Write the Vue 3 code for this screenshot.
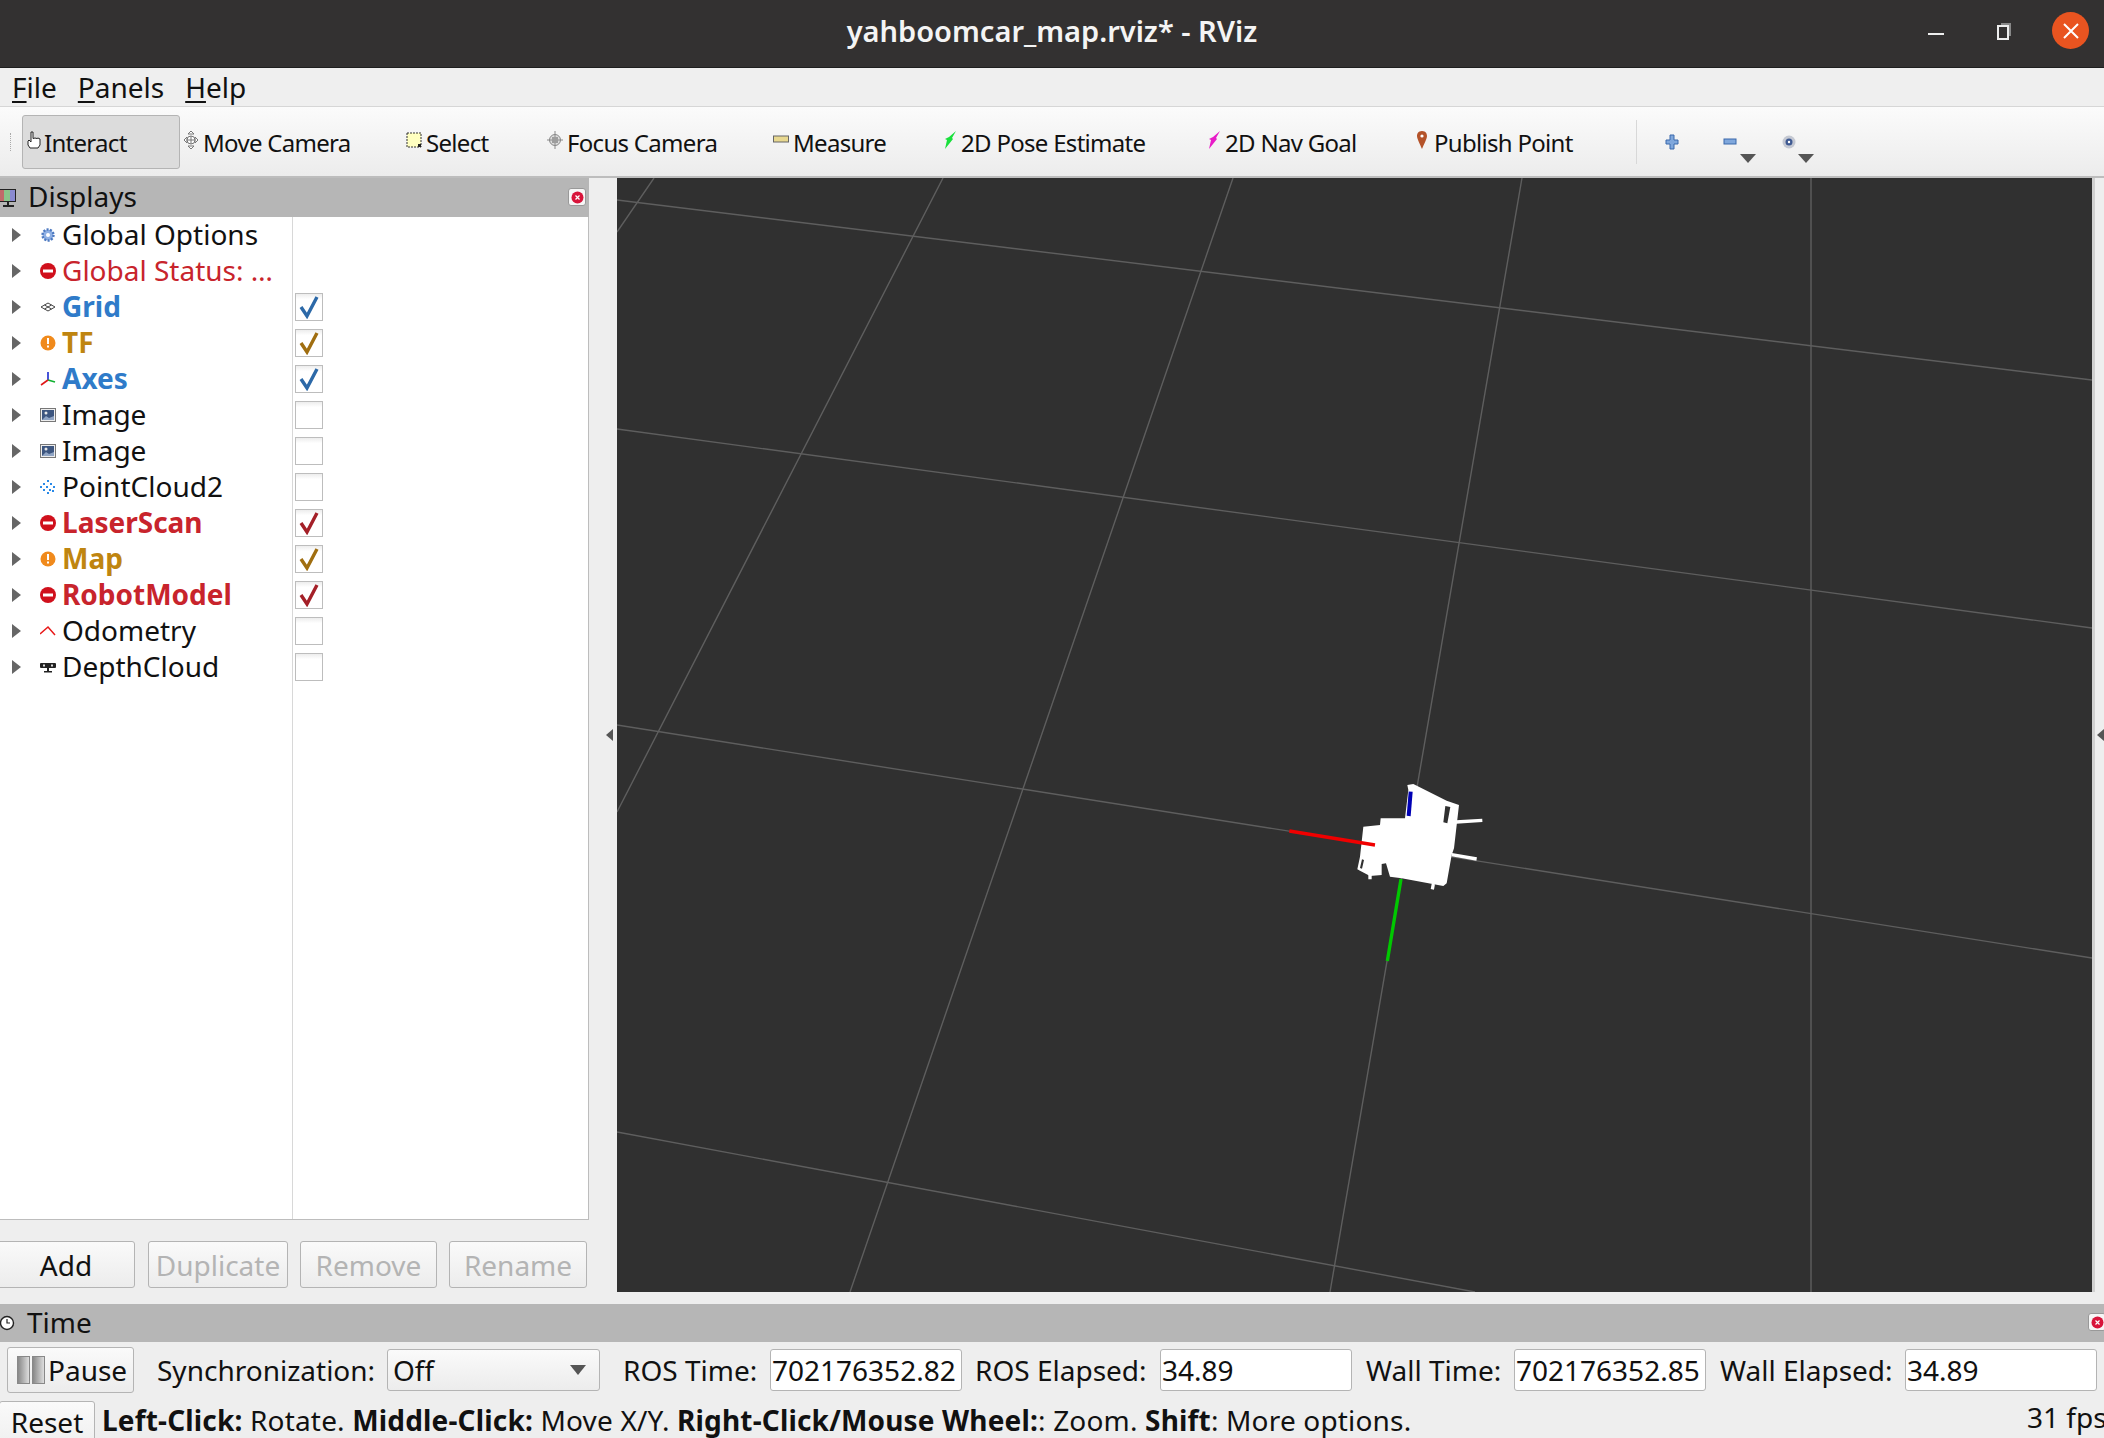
<template>
  <div class="rviz">
    <!-- window title -->
    <header class="titlebar">
      <span class="title">yahboomcar_map.rviz* - RViz</span>
      <div class="win-btns">
        <span class="win-min"></span>
        <span class="win-max"></span>
        <span class="win-close">
          <svg width="20" height="20" viewBox="0 0 20 20"><path d="M3 3L17 17M17 3L3 17" stroke="#fff" stroke-width="2" /></svg>
        </span>
      </div>
    </header>

    <nav class="menubar">
      <span><u>F</u>ile</span>
      <span><u>P</u>anels</span>
      <span><u>H</u>elp</span>
    </nav>

    <!-- tools -->
    <div class="toolbar">
      <span class="handle"></span>
      <div
        v-for="t in tools"
        :key="t.name"
        class="tool"
        :class="{ active: t.active }"
        :style="{ width: t.width + 'px' }"
      >
        <svg class="tool-icon" viewBox="0 0 16 20">
          <path v-if="t.icon === 'hand'" d="M5 2v10L3 10 2 11v4l2 3h8l2-3V9l-2-1-1 .5L9 8l-2 .5V2z" fill="#fff" stroke="#222" stroke-width="1" />
          <g v-else-if="t.icon === 'move'" fill="#fff" stroke="#777" stroke-width="1">
            <path d="M8 1l3 3H5zM8 19l3-3H5zM1 10l3-3v6zM15 10l-3-3v6z" />
            <circle cx="8" cy="10" r="4" />
            <path d="M8 6v8M4 10h8" />
          </g>
          <g v-else-if="t.icon === 'select'">
            <rect x="1" y="3" width="14" height="14" fill="#ffffc0" stroke="#333" stroke-dasharray="2 1" />
            <rect x="12" y="14" width="3" height="3" fill="#222" />
          </g>
          <g v-else-if="t.icon === 'focus'" fill="none" stroke="#888">
            <circle cx="8" cy="10" r="5.5" fill="#ddd" />
            <path d="M8 1v18M0 10h16M5 8h6M5 12h6M6 7v6M10 7v6" />
          </g>
          <g v-else-if="t.icon === 'ruler'">
            <rect x="0.5" y="6" width="15" height="6" fill="#e8d890" stroke="#666" />
          </g>
          <path v-else-if="t.icon === 'pose'" d="M15 1L11 8l1 1-8 10 2-9-2-1 4-2z" fill="#19e03c" />
          <path v-else-if="t.icon === 'nav'" d="M15 1L11 8l1 1-8 10 2-9-2-1 4-2z" fill="#e81cc8" />
          <g v-else-if="t.icon === 'pin'">
            <path d="M8 1c4 0 5 3 5 5 0 3-3 8-5 13-2-5-5-10-5-13 0-2 1-5 5-5z" fill="#b4532a" />
            <circle cx="8" cy="6" r="1.6" fill="#fff" />
          </g>
        </svg>
        <span>{{ t.name }}</span>
      </div>
      <span class="tool-sep"></span>
      <div class="view-tools">
        <div class="view-tool">
          <svg width="14" height="16" viewBox="0 0 14 16"><path d="M5 1h4v5h4v4H9v5H5v-5H1V6h4z" fill="#7fa7dc" stroke="#3a68ab" /></svg>
        </div>
        <div class="view-tool">
          <svg width="14" height="16" viewBox="0 0 14 16"><rect x="1" y="5" width="12" height="5" fill="#7fa7dc" stroke="#3a68ab" /></svg>
          <i class="drop"></i>
        </div>
        <div class="view-tool">
          <svg width="16" height="16" viewBox="0 0 16 16"><circle cx="8" cy="8" r="6.5" fill="#c4c8d2" /><circle cx="8" cy="8" r="3.5" fill="#3f5a92" /><circle cx="8" cy="8" r="1.2" fill="#fff" /></svg>
          <i class="drop"></i>
        </div>
      </div>
    </div>

    <main class="workspace">
      <!-- displays panel -->
      <section class="displays">
        <div class="panel-head">
          <svg class="monitor" width="17" height="20" viewBox="0 0 17 20">
            <rect x="-3" y="1" width="19" height="13" fill="#222" />
            <rect x="-2" y="2" width="6" height="11" fill="#c26a6a" />
            <rect x="4" y="2" width="6" height="11" fill="#8ac48a" />
            <rect x="10" y="2" width="5" height="11" fill="#8a8ad0" />
            <path d="M8 14v3M3 18h11" stroke="#222" stroke-width="2" />
          </svg>
          <span class="head-label">Displays</span>
          <span class="close-box">
            <svg width="13" height="13" viewBox="0 0 13 13"><circle cx="6.5" cy="6.5" r="6" fill="#d8143a" /><path d="M4.5 4.5l4 4M8.5 4.5l-4 4" stroke="#fff" stroke-width="1.2" /></svg>
          </span>
        </div>
        <div class="tree">
          <div v-for="(r, i) in rows" :key="i" class="tree-row">
            <div class="tree-name" :class="[r.tone, { bold: r.bold }]">
              <i class="arrow"></i>
              <svg class="row-icon" width="16" height="16" viewBox="0 0 16 16">
                <g v-if="r.icon === 'gear'">
                  <circle cx="8" cy="8" r="5.5" fill="#8fb0e4" stroke="#4d79c0" stroke-width="2.4" stroke-dasharray="2 1.4" />
                  <circle cx="8" cy="8" r="2" fill="#fff" />
                </g>
                <g v-else-if="r.icon === 'err'">
                  <circle cx="8" cy="8" r="8" fill="#d0101c" />
                  <rect x="3" y="6.5" width="10" height="3" fill="#fff" />
                </g>
                <g v-else-if="r.icon === 'warn'">
                  <circle cx="8" cy="8" r="7.5" fill="#f08a1c" />
                  <rect x="7" y="3" width="2" height="6" fill="#fff" />
                  <rect x="7" y="10.5" width="2" height="2" fill="#fff" />
                </g>
                <path v-else-if="r.icon === 'grid'" d="M1 8l7-4 7 4-7 4zM4.5 6l7 4M11.5 6l-7 4" fill="none" stroke="#444" />
                <g v-else-if="r.icon === 'axes'" fill="none" stroke-width="1.6">
                  <path d="M8 9V1" stroke="#1a2ad0" />
                  <path d="M8 9l7 2" stroke="#10b030" />
                  <path d="M8 9l-7 5" stroke="#e01818" />
                </g>
                <g v-else-if="r.icon === 'image'">
                  <rect x="0.5" y="1.5" width="15" height="13" fill="#eee" stroke="#777" />
                  <rect x="2" y="3" width="12" height="10" fill="#3d5680" />
                  <path d="M2 13l4-4 3 2 5-2v4z" fill="#8fa4c4" />
                  <circle cx="6" cy="6" r="1.5" fill="#e8e8e8" />
                </g>
                <g v-else-if="r.icon === 'cloud'" fill="#2a8ae8">
                  <rect x="7" y="1" width="2" height="2" /><rect x="3" y="4" width="2" height="2" />
                  <rect x="10" y="4" width="2" height="2" /><rect x="0" y="7" width="2" height="2" />
                  <rect x="6" y="7" width="2" height="2" /><rect x="13" y="7" width="2" height="2" />
                  <rect x="3" y="10" width="2" height="2" /><rect x="9" y="10" width="2" height="2" />
                  <rect x="7" y="13" width="2" height="2" /><rect x="12" y="11" width="2" height="2" />
                </g>
                <path v-else-if="r.icon === 'odom'" d="M0 11l8-7 7 8M8 4" fill="none" stroke="#e81818" stroke-width="1.5" />
                <g v-else-if="r.icon === 'depth'" fill="#222">
                  <rect x="0" y="4" width="16" height="5" rx="1" />
                  <rect x="3" y="5.5" width="2" height="2" fill="#ddd" /><rect x="11" y="5.5" width="2" height="2" fill="#ddd" />
                  <rect x="7" y="9" width="2" height="3" /><rect x="4" y="12" width="8" height="1.5" />
                </g>
              </svg>
              <span class="row-label">{{ r.name }}</span>
            </div>
            <div v-if="r.check !== undefined" class="checkbox">
              <svg v-if="r.check" width="24" height="24" viewBox="0 0 24 24">
                <path d="M4 12l6 9L20 2" fill="none" :stroke="checkColor(r.tone)" stroke-width="3.4" />
              </svg>
            </div>
          </div>
        </div>
        <div class="panel-btns">
          <button class="btn add">Add</button>
          <button class="btn off dup">Duplicate</button>
          <button class="btn off rem">Remove</button>
          <button class="btn off ren">Rename</button>
        </div>
      </section>

      <div class="left-split"><i class="split-tri"></i></div>

      <!-- 3D view -->
      <section class="view3d">
        <svg width="1475" height="1114" viewBox="617 178 1475 1114">
          <g stroke="#5e5e5e" stroke-width="1.4" fill="none">
            <path d="M617 200L2092 380M617 429L2092 628M617 725L2092 958M617 1132L1475 1292" />
            <path d="M654 178L617 232M943 178L617 812M1233 178L850 1292M1522 178L1330 1292M1811 178V1292" />
          </g>
          <g transform="translate(1270 760) scale(.33333)">
            <path fill="#fff" d="M412 75L430 72L530 122L567 135L552 265L545 285L530 370L520 378L395 355L360 350L348 310L335 312L335 345L300 348L270 332L262 328L270 290L280 200L330 195L332 175L405 175L415 90Z" />
            <path d="M558 186L637 181M545 284L620 297M300 345V358M490 372L487 388" stroke="#fff" stroke-width="10" />
            <path fill="#303030" d="M526 138L541 141L532 190L520 187ZM276 298L282 300L276 326L270 324Z" />
            <path d="M422 95L416 168" stroke="#0000b4" stroke-width="12" />
            <path d="M58 213L315 255" stroke="#f00000" stroke-width="10" />
            <path d="M393 357L352 603" stroke="#00c800" stroke-width="10" />
          </g>
        </svg>
      </section>

      <div class="right-split"><i class="split-tri-r"></i></div>
    </main>

    <div class="h-split"></div>

    <!-- time panel -->
    <section class="time-panel">
      <div class="panel-head time-head">
        <svg class="clock" width="16" height="20" viewBox="0 0 16 20">
          <circle cx="8" cy="10" r="6.5" fill="#fff" stroke="#222" stroke-width="1.4" />
          <path d="M8 6v4h3" fill="none" stroke="#222" stroke-width="1.2" />
        </svg>
        <span class="head-label">Time</span>
        <span class="close-box">
          <svg width="13" height="13" viewBox="0 0 13 13"><circle cx="6.5" cy="6.5" r="6" fill="#d8143a" /><path d="M4.5 4.5l4 4M8.5 4.5l-4 4" stroke="#fff" stroke-width="1.2" /></svg>
        </span>
      </div>
      <div class="time-row">
        <button class="btn pause"><i></i><i></i><span>Pause</span></button>
        <label class="lbl sync">Synchronization:</label>
        <div class="combo">Off<i></i></div>
        <label class="lbl ros-t">ROS Time:</label>
        <div class="field">702176352.82</div>
        <label class="lbl ros-e">ROS Elapsed:</label>
        <div class="field">34.89</div>
        <label class="lbl wall-t">Wall Time:</label>
        <div class="field">702176352.85</div>
        <label class="lbl wall-e">Wall Elapsed:</label>
        <div class="field">34.89</div>
      </div>
      <div class="status-row">
        <button class="btn reset">Reset</button>
        <span class="hint"><b>Left-Click:</b> Rotate. <b>Middle-Click:</b> Move X/Y. <b>Right-Click/Mouse Wheel:</b>: Zoom. <b>Shift</b>: More options.</span>
        <span class="fps">31 fps</span>
      </div>
    </section>
  </div>
</template>

<script setup>
const tools = [
  { name: 'Interact', icon: 'hand', width: 158, active: true },
  { name: 'Move Camera', icon: 'move', width: 223 },
  { name: 'Select', icon: 'select', width: 141 },
  { name: 'Focus Camera', icon: 'focus', width: 226 },
  { name: 'Measure', icon: 'ruler', width: 168 },
  { name: '2D Pose Estimate', icon: 'pose', width: 264 },
  { name: '2D Nav Goal', icon: 'nav', width: 209 },
  { name: 'Publish Point', icon: 'pin', width: 221 }
]

const rows = [
  { name: 'Global Options', icon: 'gear' },
  { name: 'Global Status: …', icon: 'err', tone: 'red' },
  { name: 'Grid', icon: 'grid', tone: 'blue', bold: true, check: true },
  { name: 'TF', icon: 'warn', tone: 'orange', bold: true, check: true },
  { name: 'Axes', icon: 'axes', tone: 'blue', bold: true, check: true },
  { name: 'Image', icon: 'image', check: false },
  { name: 'Image', icon: 'image', check: false },
  { name: 'PointCloud2', icon: 'cloud', check: false },
  { name: 'LaserScan', icon: 'err', tone: 'red', bold: true, check: true },
  { name: 'Map', icon: 'warn', tone: 'orange', bold: true, check: true },
  { name: 'RobotModel', icon: 'err', tone: 'red', bold: true, check: true },
  { name: 'Odometry', icon: 'odom', check: false },
  { name: 'DepthCloud', icon: 'depth', check: false }
]

function checkColor(tone) {
  if (tone === 'red') return '#a42028'
  if (tone === 'orange') return '#a06e10'
  return '#2c69a8'
}
</script>

<style>
html, body {
  margin: 0;
  background: #eeeeee;
  overflow: hidden;
}
</style>

<style scoped>
.rviz {
  width: 2104px;
  height: 1438px;
  overflow: hidden;
  display: flex;
  flex-direction: column;
  background: #eeeeee;
  font-family: "Noto Sans", "Open Sans", sans-serif;
  font-size: 28px;
  color: #111;
}

.titlebar {
  height: 67px;
  flex: none;
  position: relative;
  display: flex;
  align-items: center;
  justify-content: center;
  background: #333131;
  border-bottom: 1px solid #1e1e1e;
}
.title {
  color: #f4f4f4;
  font-weight: 600;
  font-size: 29px;
  margin-bottom: 6px;
}
.win-btns {
  position: absolute;
  right: 0;
  top: 0;
  width: 190px;
  height: 67px;
}
.win-min {
  position: absolute;
  left: 14px;
  top: 33px;
  width: 16px;
  height: 2px;
  background: #eee;
}
.win-max {
  position: absolute;
  left: 83px;
  top: 25px;
  width: 8px;
  height: 11px;
  border: 2px solid #eee;
  box-shadow: 3px -3px 0 -1px #888;
}
.win-close {
  position: absolute;
  left: 138px;
  top: 12px;
  width: 37px;
  height: 37px;
  border-radius: 50%;
  background: #e95420;
  display: flex;
  align-items: center;
  justify-content: center;
}

.menubar {
  height: 38px;
  flex: none;
  display: flex;
  gap: 21px;
  padding-left: 12px;
  align-items: center;
  background: #efefef;
  border-bottom: 1px solid #d6d6d6;
}
.menubar u { text-underline-offset: 3px; }

.toolbar {
  height: 71px;
  flex: none;
  display: flex;
  align-items: center;
  position: relative;
  padding-left: 22px;
  padding-top: 1px;
  background: linear-gradient(#fbfbfb, #ececec);
  border-bottom: 2px solid #bdbdbd;
  box-sizing: border-box;
  font-size: 24px;
  letter-spacing: -0.7px;
}
.handle {
  position: absolute;
  left: 10px;
  top: 26px;
  height: 18px;
  border-left: 1px dotted #aaa;
}
.tool {
  height: 54px;
  flex: none;
  display: flex;
  align-items: center;
  box-sizing: border-box;
  padding-left: 3px;
  gap: 4px;
  white-space: nowrap;
}
.tool.active {
  gap: 2px;
  background: #dcdcdc;
  border: 1px solid #b4b4b4;
  border-radius: 3px;
}
.tool-icon {
  width: 16px;
  height: 20px;
  flex: none;
  margin-bottom: 4px;
}
.tool-sep {
  width: 1px;
  height: 44px;
  background: #d8d8d8;
  margin-left: 4px;
}
.view-tools {
  display: flex;
  margin-left: 28px;
}
.view-tool {
  width: 58px;
  height: 54px;
  position: relative;
  display: flex;
  justify-content: flex-start;
  padding-top: 19px;
  box-sizing: border-box;
}
.drop {
  position: absolute;
  left: 17px;
  top: 39px;
  border-left: 8px solid transparent;
  border-right: 8px solid transparent;
  border-top: 9px solid #555;
}

.workspace {
  height: 1114px;
  flex: none;
  display: flex;
}
.displays {
  width: 589px;
  flex: none;
  display: flex;
  flex-direction: column;
}
.panel-head {
  height: 39px;
  flex: none;
  display: flex;
  align-items: center;
  position: relative;
  background: #b6b6b6;
}
.monitor { margin-right: 11px; }
.head-label { margin-bottom: 3px; }
.close-box {
  position: absolute;
  right: 3px;
  top: 10px;
  width: 18px;
  height: 18px;
  box-sizing: border-box;
  background: #f6f6f6;
  border: 1px solid #999;
  border-radius: 3px;
  display: flex;
  align-items: center;
  justify-content: center;
}

.tree {
  flex: 1;
  background: #fff;
  border-right: 1px solid #bdbdbd;
  border-bottom: 1px solid #bdbdbd;
  background-image: linear-gradient(#d8d8d8, #d8d8d8);
  background-size: 1px 100%;
  background-position: 292px 0;
  background-repeat: no-repeat;
}
.tree-row {
  height: 36px;
  display: flex;
  align-items: center;
}
.tree-name {
  width: 295px;
  flex: none;
  display: flex;
  align-items: center;
  padding-left: 12px;
  box-sizing: border-box;
  white-space: nowrap;
}
.arrow {
  width: 0;
  height: 0;
  border-left: 9px solid #666;
  border-top: 7px solid transparent;
  border-bottom: 7px solid transparent;
  margin-right: 19px;
}
.row-icon { margin-right: 6px; flex: none; }
.row-label { margin-bottom: 2px; }
.bold { font-weight: 700; }
.red { color: #c8242c; }
.blue { color: #2f7bc9; }
.orange { color: #bf8510; }
.checkbox {
  width: 28px;
  height: 28px;
  box-sizing: border-box;
  border: 1px solid #bdbdbd;
  background: linear-gradient(#ededed, #fff 20%);
  display: flex;
  align-items: center;
  justify-content: center;
}

.panel-btns {
  height: 72px;
  flex: none;
  display: flex;
  align-items: flex-start;
  padding-top: 21px;
  box-sizing: border-box;
  overflow: hidden;
}
.btn {
  font: inherit;
  height: 47px;
  padding: 0;
  color: #111;
  background: linear-gradient(#fafafa, #ececec);
  border: 1px solid #b4b4b4;
  border-radius: 3px;
  box-sizing: border-box;
}
.btn.off { color: #b4b4b4; }
.add { width: 138px; margin-left: -3px; }
.dup { width: 140px; margin-left: 13px; }
.rem { width: 137px; margin-left: 12px; }
.ren { width: 138px; margin-left: 12px; }

.left-split {
  width: 28px;
  flex: none;
  display: flex;
  align-items: center;
  padding-left: 17px;
  box-sizing: border-box;
}
.split-tri {
  border-right: 7px solid #555;
  border-top: 6px solid transparent;
  border-bottom: 6px solid transparent;
}
.view3d {
  width: 1475px;
  flex: none;
  background: #303030;
  line-height: 0;
}
.view3d svg { display: block; }
.right-split {
  flex: 1;
  display: flex;
  align-items: center;
  justify-content: flex-end;
  border-left: 3px solid #d0d0d0;
}
.split-tri-r {
  border-right: 7px solid #555;
  border-top: 6px solid transparent;
  border-bottom: 6px solid transparent;
}

.h-split {
  height: 12px;
  flex: none;
}
.time-panel {
  flex: 1;
  display: flex;
  flex-direction: column;
}
.time-head {
  height: 38px;
}
.clock { margin-right: 12px; margin-left: -1px; }
.time-head .close-box { right: -2px; top: 9px; }

.time-row {
  height: 52px;
  flex: none;
  display: flex;
  align-items: center;
  padding-left: 7px;
  padding-top: 3px;
  box-sizing: border-box;
}
.pause {
  width: 127px;
  height: 46px;
  display: flex;
  align-items: center;
  padding-left: 9px;
  flex: none;
}
.pause i {
  width: 13px;
  height: 28px;
  margin-right: 2px;
  background: linear-gradient(90deg, #888, #ddd);
  border: 1px solid #888;
  box-sizing: border-box;
}
.pause span { margin-left: 1px; }
.lbl { flex: none; white-space: nowrap; }
.sync { margin-left: 23px; width: 230px; }
.ros-t { margin-left: 23px; width: 147px; }
.ros-e { margin-left: 13px; width: 185px; }
.wall-t { margin-left: 14px; width: 148px; }
.wall-e { margin-left: 14px; width: 185px; }
.combo {
  width: 213px;
  height: 42px;
  flex: none;
  box-sizing: border-box;
  border: 1px solid #b4b4b4;
  border-radius: 3px;
  background: linear-gradient(#fafafa, #ececec);
  padding-left: 5px;
  display: flex;
  align-items: center;
  justify-content: space-between;
}
.combo i {
  margin-right: 13px;
  border-left: 8px solid transparent;
  border-right: 8px solid transparent;
  border-top: 10px solid #555;
}
.field {
  width: 192px;
  height: 42px;
  flex: none;
  box-sizing: border-box;
  border: 1px solid #b4b4b4;
  border-radius: 3px;
  background: #fff;
  padding-left: 1px;
  display: flex;
  align-items: center;
  white-space: nowrap;
}

.status-row {
  flex: 1;
  display: flex;
  align-items: flex-start;
  padding-top: 7px;
  position: relative;
  white-space: nowrap;
}
.reset {
  width: 96px;
  height: 60px;
  margin-left: -1px;
  flex: none;
  padding-bottom: 18px;
}
.hint { margin-left: 7px; letter-spacing: 0.17px; }
.fps { position: absolute; left: 2027px; top: 4px; }
</style>
